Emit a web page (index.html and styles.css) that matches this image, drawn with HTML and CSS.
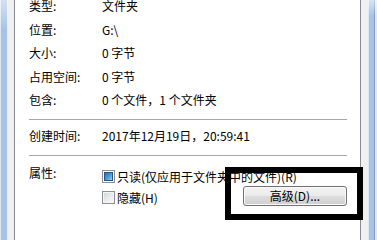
FILE: index.html
```html
<!DOCTYPE html>
<html lang="zh-CN">
<head>
<meta charset="utf-8">
<link rel="stylesheet" href="styles.css">
</head>
<body>
<div class="window">
  <div class="frame-l"></div>
  <div class="gutter-l"></div>
  <div class="page">
    <div class="info">
      <span class="lbl">类型:</span><span class="val">文件夹</span>
      <span class="lbl">位置:</span><span class="val">G:\</span>
      <span class="lbl">大小:</span><span class="val">0 字节</span>
      <span class="lbl">占用空间:</span><span class="val">0 字节</span>
      <span class="lbl">包含:</span><span class="val">0 个文件，1 个文件夹</span>
    </div>
    <div class="sep sep-a"></div>
    <div class="created">
      <span class="lbl">创建时间:</span><span class="val">2017年12月19日，20:59:41</span>
    </div>
    <div class="sep sep-b"></div>
    <div class="attrs">
      <div class="lbl">属性:</div>
      <div class="opts">
        <div class="opt"><span class="cb cb-mixed"><span class="cb-fill"></span></span><span>只读(仅应用于文件夹中的文件)(R)</span></div>
        <div class="opt opt-last">
          <span class="opt-main"><span class="cb"></span><span>隐藏(H)</span></span>
          <button class="btn">高级(D)...</button>
        </div>
      </div>
    </div>
  </div>
  <div class="gutter-r"></div>
  <div class="frame-r"></div>
</div>
<div class="callout"></div>
</body>
</html>
```
FILE: styles.css
```css
html, body {
  margin: 0;
  padding: 0;
}
html {
  background: linear-gradient(to right,
    #dbe6f2 0 1px, #a6c3e4 1px 7px, #e4ecf4 7px 8px,
    #f0f0f0 8px 14px, #898c95 14px 15px, #ffffff 15px 360px,
    #898c95 360px 361px, #f0f0f0 361px 368px,
    #dce8f5 368px 369px, #a7c4e5 369px 374px, #7f9dc1 374px 375px, #dfe8f2 375px 377px);
}
body {
  font-family: "Noto Sans CJK SC", "Noto Sans", sans-serif;
  font-size: 12px;
  line-height: 16px;
  color: #000;
  overflow: hidden;
  width: 377px;
  min-height: 226px;
  position: relative;
}
.window {
  display: flex;
  width: 377px;
  height: 100vh;
  min-height: 226px;
}
.frame-l {
  flex: none;
  width: 8px;
  background:
    linear-gradient(to bottom, rgba(255,255,255,0.5), rgba(255,255,255,0) 30px),
    linear-gradient(to right, #dbe6f2 0 1px, #a6c3e4 1px 7px, #e4ecf4 7px 8px);
}
.gutter-l {
  flex: none;
  width: 6px;
  background: #f0f0f0;
}
.page {
  flex: none;
  width: 347px;
  box-sizing: border-box;
  background: #fff;
  border-left: 1px solid #898c95;
  border-right: 1px solid #898c95;
  padding: 0 13px 0 14px;
}
.gutter-r {
  flex: none;
  width: 7px;
  background: #f0f0f0;
}
.frame-r {
  flex: none;
  width: 9px;
  background:
    linear-gradient(to bottom, rgba(255,255,255,0.55), rgba(255,255,255,0) 16px),
    linear-gradient(to right, #dce8f5 0 1px, #a7c4e5 1px 6px, #7f9dc1 6px 7px, #dfe8f2 7px 9px);
}
.info {
  display: grid;
  grid-template-columns: 73px 1fr;
  grid-auto-rows: 23.5px;
  align-items: center;
  margin-top: -5.75px;
}
.lbl, .val {
  white-space: nowrap;
}
.sep {
  height: 1px;
  background: #a8a8a8;
}
.sep-a {
  margin-top: 7.25px;
}
.created {
  display: grid;
  grid-template-columns: 73px 1fr;
  height: 24px;
  align-items: center;
  margin-top: 4px;
}
.sep-b {
  margin-top: 7px;
}
.attrs {
  display: grid;
  grid-template-columns: 73px 1fr;
  margin-top: 9px;
}
.opts {
  padding-top: 1px;
}
.opt {
  display: flex;
  align-items: center;
  height: 21px;
  white-space: nowrap;
}
.opt-last {
  justify-content: space-between;
}
.opt-main {
  display: flex;
  align-items: center;
}
.cb {
  flex: none;
  width: 13px;
  height: 13px;
  box-sizing: border-box;
  margin-right: 2px;
  border: 1px solid #8f8f8f;
  background: linear-gradient(135deg, #cfd2d6 0%, #e9eaeb 50%, #fbfbfb 100%);
  box-shadow: inset 0 0 0 1px #f5f5f5;
}
.cb-mixed {
  background: #fff;
  box-shadow: none;
  padding: 1px;
}
.cb-fill {
  display: block;
  width: 9px;
  height: 9px;
  box-sizing: border-box;
  border: 1px solid #245786;
  background: linear-gradient(135deg, #2c6fa9 0%, #4f9bd4 55%, #9fd0f0 100%);
}
.btn {
  align-self: flex-start;
  margin-top: -1px;
  width: 104px;
  height: 20px;
  box-sizing: border-box;
  padding: 0;
  border: 1px solid #707070;
  border-radius: 3px;
  background: linear-gradient(#f3f3f3 0%, #ebebeb 48%, #dddddd 52%, #cfcfcf 100%);
  box-shadow: inset 0 0 0 1px #fbfbfb;
  font: inherit;
  line-height: 16px;
  color: #000;
}
.callout {
  position: absolute;
  left: 225px;
  top: 167px;
  width: 138px;
  height: 53px;
  box-sizing: border-box;
  border: 6px solid #000;
}
```
